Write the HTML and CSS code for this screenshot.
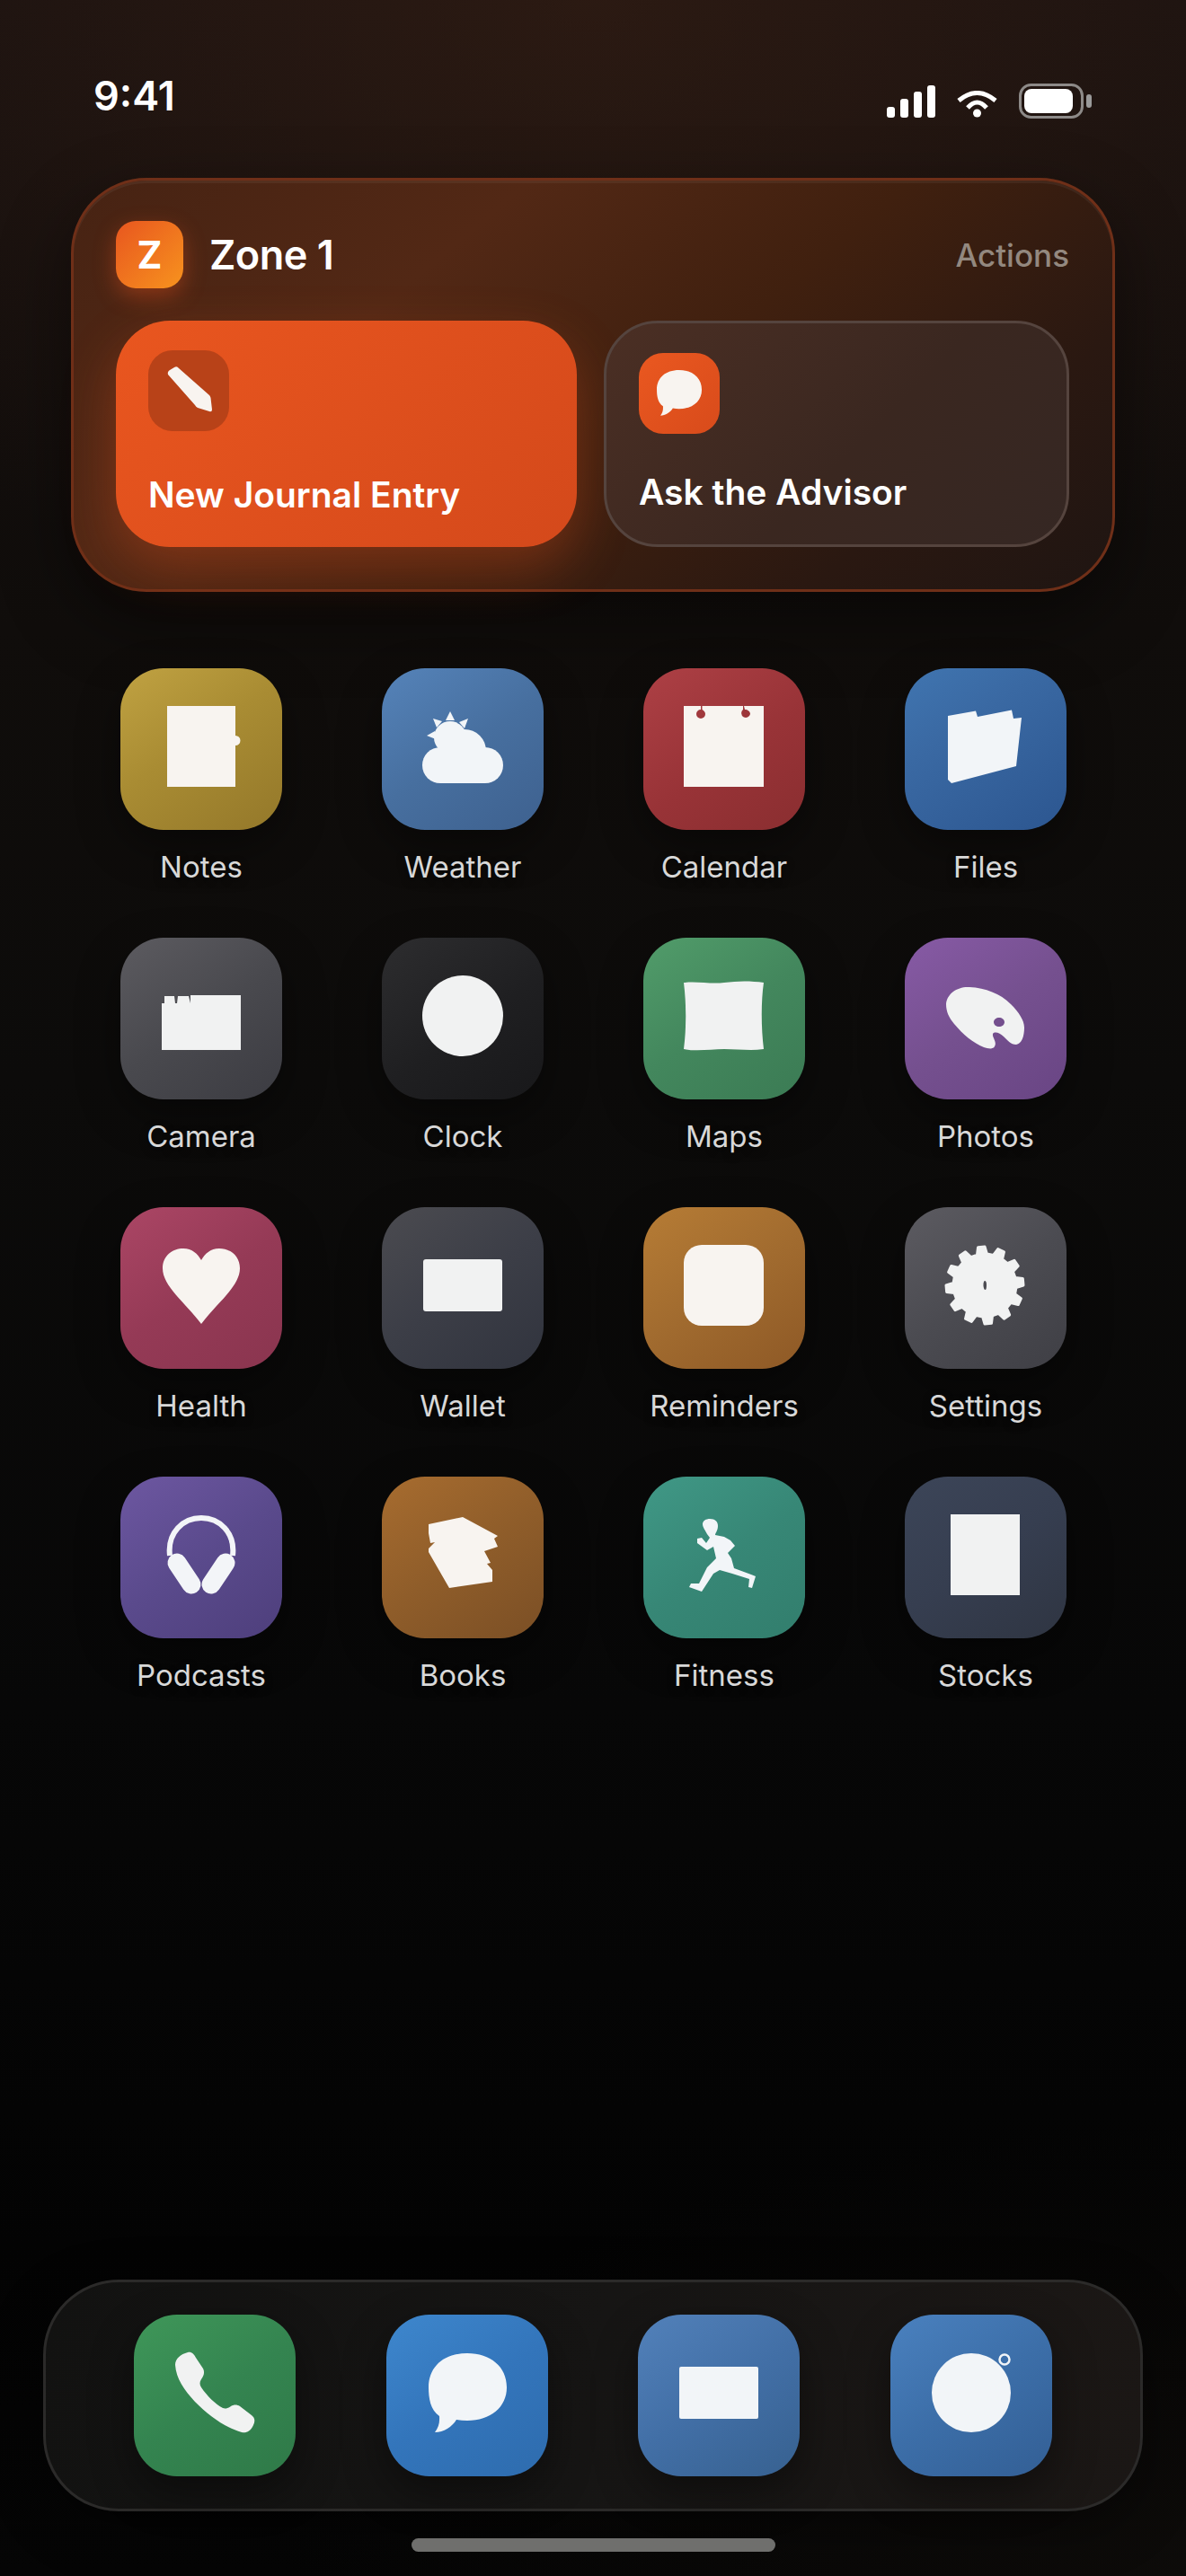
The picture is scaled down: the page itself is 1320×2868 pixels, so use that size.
FILE: index.html
```html
<!DOCTYPE html>
<html lang="en">
<head>
<meta charset="utf-8">
<title>Home Screen</title>
<link rel="stylesheet" href="styles.css">
</head>
<body>
<div class="screen">
  <header class="status">
    <span class="time">9:41</span>
    <div class="status-icons">
      <svg class="sig" width="54" height="36" viewBox="0 0 54 36"><rect x="0" y="24" width="9" height="12" rx="3"/><rect x="15" y="15" width="9" height="21" rx="3"/><rect x="30" y="7" width="9" height="29" rx="3"/><rect x="45" y="0" width="9" height="36" rx="3"/></svg>
      <svg class="wifi" width="45" height="30" viewBox="0 0 45 30"><path d="M2 11Q22.500-6 43 11"/><path d="M12 19Q22.500 7 33 19"/><circle cx="22.500" cy="25" r="4.500"/></svg>
      <svg class="batt" width="81" height="39" viewBox="0 0 81 39"><rect class="batt-shell" x="1.500" y="1.500" width="69" height="36" rx="12"/><rect class="batt-fill" x="6" y="6" width="54" height="27" rx="8"/><rect class="batt-nub" x="75" y="12" width="6" height="15" rx="3"/></svg>
    </div>
  </header>

  <section class="widget">
    <div class="widget-head">
      <div class="zone-badge">Z</div>
      <div class="zone-title">Zone 1</div>
      <div class="zone-actions">Actions</div>
    </div>
    <div class="widget-btns">
      <div class="btn btn-primary">
        <div class="btn-icon btn-icon-dark">
          <svg class="glyph" viewBox="0 0 90 90"><path class="warm" d="M22 27Q21 24 24 22L29 19Q32 17 34 20L68 50Q69 51 69.500 53L71 66Q71 69 68 68L55 64Q53 63 52 61Z"/></svg>
        </div>
        <div class="btn-label">New Journal Entry</div>
      </div>
      <div class="btn btn-ghost">
        <div class="btn-icon btn-icon-orange">
          <svg class="glyph" viewBox="0 0 90 90"><g transform="translate(-7 -5.700) scale(.575)"><path class="warm" d="M90 43C116 43 134 58 134 81C134 103 116 118 90 118C86 118 82 117.500 78 117C73 125 64 131 54 131C58 126 59.500 121 59 113C49 106 47 93 47 81C47 58 64 43 90 43Z"/></g></svg>
        </div>
        <div class="btn-label">Ask the Advisor</div>
      </div>
    </div>
  </section>

  <main class="apps">
    <div class="app">
      <div class="icon notes"><svg class="glyph" viewBox="0 0 180 180"><path class="warm" d="M52 42H128V75A5 5 0 0 1 128 86V132H52Z"/></svg></div>
      <div class="label">Notes</div>
    </div>
    <div class="app">
      <div class="icon weather"><svg class="glyph" viewBox="0 0 180 180"><g class="cool"><polygon points="76,48 71,58 81,58"/><polygon points="96,56 86,60 92,67"/><polygon points="57,56 67,59 61,66"/><polygon points="50,75 59,70 60,79"/><circle cx="76" cy="77" r="18"/><circle cx="92" cy="92" r="24"/><circle cx="65" cy="108" r="20"/><circle cx="115" cy="108" r="20"/><rect x="65" y="100" width="50" height="28"/></g></svg></div>
      <div class="label">Weather</div>
    </div>
    <div class="app">
      <div class="icon calendar"><svg class="glyph" viewBox="0 0 180 180"><path class="warm" fill-rule="evenodd" d="M45 42H64V46A5 5 0 1 0 69 51C69 49 67.500 47 65.500 46V42H111V46A5 5 0 1 0 119 51C119 48 116 46 113 46L112 42H134V132H45Z"/></svg></div>
      <div class="label">Calendar</div>
    </div>
    <div class="app">
      <div class="icon files"><svg class="glyph" viewBox="0 0 180 180"><path class="cool" d="M48 53L79 47.500L81 54L119 46.500L121 56L130 55L124 109L52 128L48 124Z"/></svg></div>
      <div class="label">Files</div>
    </div>

    <div class="app">
      <div class="icon camera"><svg class="glyph" viewBox="0 0 180 180"><path class="neutral" d="M46 73H49V65H60L61 73H63L64 65H76L78 73V64H134V125H46Z"/></svg></div>
      <div class="label">Camera</div>
    </div>
    <div class="app">
      <div class="icon clock"><svg class="glyph" viewBox="0 0 180 180"><circle class="neutral" cx="90" cy="87" r="45"/></svg></div>
      <div class="label">Clock</div>
    </div>
    <div class="app">
      <div class="icon maps"><svg class="glyph" viewBox="0 0 180 180"><path class="neutral" d="M45 50C60 48 75 52 90 50C105 48 120 48 134 50C131 70 131 100 134 124C120 126 105 124 90 124C75 124 60 127 45 124C48 100 48 75 45 50Z"/></svg></div>
      <div class="label">Maps</div>
    </div>
    <div class="app">
      <div class="icon photos"><svg class="glyph" viewBox="0 0 180 180"><path class="neutral" fill-rule="evenodd" d="M46 74C47 62 59 54 72 55C90 56 106 62 118 74C127 83 133 92 133 100C133 110 130 118 124 119C118 119 114 114 110 110C106 106 100 104 98 107C97 111 103 116 100 121C98 125 92 123 88 122C76 117 65 108 55 96C49 89 46 82 46 74ZM105 89C102 89 99 91 99 94C99 97 102 99 105 99C108 99 111 97 111 94C111 91 108 89 105 89Z"/></svg></div>
      <div class="label">Photos</div>
    </div>

    <div class="app">
      <div class="icon health"><svg class="glyph" viewBox="0 0 180 180"><path class="warm" d="M90 130C72 106 47 88 47 68C47 54 58 46 70 46C80 46 86 52 90 59C94 52 100 46 110 46C122 46 133 54 133 68C133 88 108 106 90 130Z"/></svg></div>
      <div class="label">Health</div>
    </div>
    <div class="app">
      <div class="icon wallet"><svg class="glyph" viewBox="0 0 180 180"><rect class="neutral" x="46" y="58" width="88" height="58" rx="3"/></svg></div>
      <div class="label">Wallet</div>
    </div>
    <div class="app">
      <div class="icon reminders"><svg class="glyph" viewBox="0 0 180 180"><rect class="warm" x="45" y="42" width="89" height="90" rx="20"/></svg></div>
      <div class="label">Reminders</div>
    </div>
    <div class="app">
      <div class="icon settings"><svg class="glyph" viewBox="0 0 180 180"><path class="gear" fill-rule="evenodd" d="M122.960 78.530L131.350 79.530L132 87L123.900 89.440L122.640 96.650L129.410 101.710L126.240 108.500L118.020 106.570L113.310 112.180L116.640 119.940L110.500 124.240L104.340 118.460L97.470 120.960L96.470 129.350L89 130L86.560 121.900L79.350 120.640L74.290 127.410L67.500 124.240L69.430 116.020L63.820 111.310L56.060 114.640L51.760 108.500L57.540 102.340L55.040 95.470L46.650 94.470L46 87L54.100 84.560L55.360 77.350L48.590 72.290L51.760 65.500L59.980 67.430L64.690 61.820L61.360 54.060L67.500 49.760L73.660 55.540L80.530 53.040L81.530 44.650L89 44L91.440 52.100L98.650 53.360L103.710 46.590L110.500 49.760L108.570 57.980L114.180 62.690L121.940 59.360L126.240 65.500L120.460 71.660ZM89 80.500C87 80.500 85.500 84 86 88C86.500 91.500 88 93.500 89.500 93.500C91.500 93.500 92.500 90 92.500 86.500C92.500 83 91 80.500 89 80.500Z"/></svg></div>
      <div class="label">Settings</div>
    </div>

    <div class="app">
      <div class="icon podcasts"><svg class="glyph" viewBox="0 0 180 180"><path class="phones-band" d="M55 88C52 62 70 46 90 46C110 46 128 62 125 88"/><path class="phones-cup" d="M63 96L79 120"/><path class="phones-cup" d="M117 96L101 120"/></svg></div>
      <div class="label">Podcasts</div>
    </div>
    <div class="app">
      <div class="icon books"><svg class="glyph" viewBox="0 0 180 180"><path class="warm" d="M52 53L90 45L129 66L125 69L129 78L114 83L121 96L117 97L123 104V117L75 124L52 84V80L59 73L54 74L52 63Z"/></svg></div>
      <div class="label">Books</div>
    </div>
    <div class="app">
      <div class="icon fitness"><svg class="glyph" viewBox="0 0 180 180"><path class="cool" d="M74 47C80 47 83 50 83 55C83 60 80 63 80 65L90 67L97 71L102 77L94 85L98 91L101 102L120 109L125 111L121 124L117 123L118 114L99 108L85 104L78 108L65 128L51 123L53 119L62 119L71 101L81 91L78 78L71 82L60 74L60 69L65 68L70 74L74 68L71 64C69 60 66 56 66 53C66 49 70 47 74 47Z"/></svg></div>
      <div class="label">Fitness</div>
    </div>
    <div class="app">
      <div class="icon stocks"><svg class="glyph" viewBox="0 0 180 180"><rect class="neutral" x="51" y="42" width="77" height="90"/></svg></div>
      <div class="label">Stocks</div>
    </div>
  </main>

  <footer class="dock">
    <div class="icon phone"><svg class="glyph" viewBox="0 0 180 180"><path class="neutral" d="M60 42C64 41 67 44 69 48L77 60C79 64 78 68 75 72C73 75 73 78 75 81C81 90 91 100 99 104C102 105 105 104 108 102C111 100 115 100 118 102L131 112C135 115 135 119 133 123C130 130 125 132 120 131C100 125 83 112 68 97C56 84 47 71 46 56C46 49 52 44 60 42Z"/></svg></div>
    <div class="icon messages"><svg class="glyph" viewBox="0 0 180 180"><path class="cool" d="M90 43C116 43 134 58 134 81C134 103 116 118 90 118C86 118 82 117.500 78 117C73 125 64 131 54 131C58 126 59.500 121 59 113C49 106 47 93 47 81C47 58 64 43 90 43Z"/></svg></div>
    <div class="icon mail"><svg class="glyph" viewBox="0 0 180 180"><rect class="cool" x="46" y="58" width="88" height="58" rx="2"/></svg></div>
    <div class="icon safari"><svg class="glyph" viewBox="0 0 180 180"><circle class="cool" cx="90" cy="87" r="44"/><circle class="safari-ring" cx="127" cy="50" r="5.500"/></svg></div>
  </footer>
  <div class="home-bar"></div>
</div>
</body>
</html>
```

FILE: styles.css
```css
* { box-sizing: border-box; }
html, body { margin: 0; padding: 0; background: #000; }
body { font-family: Inter, "Liberation Sans", sans-serif; color: #fff; }

.screen {
  width: 1320px;
  height: 2868px;
  overflow: hidden;
  display: flex;
  flex-direction: column;
  background:
    radial-gradient(ellipse 1100px 700px at 50% 0, rgba(70, 38, 22, .42), rgba(70, 38, 22, 0) 100%),
    radial-gradient(ellipse 1000px 500px at 100% 100%, rgba(14, 12, 10, .9), rgba(14, 12, 10, 0) 100%),
    linear-gradient(180deg, #181110 0, #100d0b 700px, #0c0b0a 1200px, #070707 1900px, #030303 2500px, #050505 2868px);
}

/* status bar */
.status {
  height: 198px;
  padding: 80px 105px 0 104px;
  display: flex;
  justify-content: space-between;
  align-items: flex-start;
  flex: none;
}
.time { font-size: 45px; font-weight: 600; line-height: 54px; }
.status-icons { display: flex; gap: 24px; align-items: flex-end; margin-top: 13px; }
.sig { fill: #fff; margin-bottom: 1px; }
.wifi { fill: #fff; margin-bottom: 1px; }
.wifi path { fill: none; stroke: #fff; stroke-width: 5; }
.batt-shell { fill: none; stroke: #8d8a88; stroke-width: 3; }
.batt-fill { fill: #fff; }
.batt-nub { fill: #9a9a9a; }

/* widget */
.widget {
  flex: none;
  margin: 0 79px;
  height: 461px;
  padding: 45px 48px 47px;
  border: 3px solid #6f2f18;
  border-radius: 84px;
  background: linear-gradient(140deg, #472313 0, #522815 30%, #40200f 55%, #2a1811 80%, #1f1512 100%);
  box-shadow: 0 30px 80px rgba(0, 0, 0, .45), inset 0 3px 0 rgba(255, 255, 255, .05);
}
.widget-head { display: flex; align-items: center; height: 75px; margin-left: -1px; }
.zone-badge {
  width: 75px;
  height: 75px;
  border-radius: 22px;
  background: linear-gradient(135deg, #e8561f, #f7931e);
  box-shadow: 0 9px 24px rgba(232, 83, 30, .4);
  display: flex;
  align-items: center;
  justify-content: center;
  font-size: 42px;
  font-weight: 700;
}
.zone-title { margin-left: 29px; font-size: 45px; font-weight: 600; letter-spacing: -.5px; }
.zone-actions { margin-left: auto; font-size: 35px; font-weight: 500; color: #93887f; }

.widget-btns {
  display: grid;
  grid-template-columns: 513fr 518fr;
  gap: 30px;
  margin-top: 36px;
  margin-left: -1px;
  height: 252px;
}
.btn {
  display: flex;
  flex-direction: column;
  justify-content: space-between;
  padding: 33px 36px 34px;
  border-radius: 60px;
}
.btn-primary {
  background: linear-gradient(135deg, #e9561f, #d4491b);
  box-shadow: 0 24px 60px rgba(232, 83, 30, .32);
}
.btn-ghost {
  border: 3px solid #55443e;
  background: linear-gradient(135deg, #4b2f24 0, #3a2720 55%, #352723 100%);
}
.btn-icon { width: 90px; height: 90px; border-radius: 27px; flex: none; }
.btn-icon-dark { background: #b84218; }
.btn-icon-orange { background: linear-gradient(135deg, #ea5820, #d84b1b); }
.btn-label { font-size: 39px; font-weight: 600; line-height: 48px; }

.glyph { display: block; width: 100%; height: 100%; }
.warm { fill: #f8f4f0; }
.cool { fill: #f2f5f8; }
.neutral { fill: #f1f2f2; }

/* apps */
.apps {
  flex: none;
  margin-top: 85px;
  padding-left: 134px;
  display: grid;
  grid-template-columns: repeat(4, 180px);
  column-gap: 111px;
  row-gap: 58px;
}
.app { width: 180px; text-align: center; }
.icon {
  width: 180px;
  height: 180px;
  border-radius: 48px;
  box-shadow: 0 18px 48px rgba(0, 0, 0, .4);
  flex: none;
}
.label {
  margin-top: 20px;
  font-size: 33px;
  line-height: 42px;
  color: #d8d8d8;
  white-space: nowrap;
  text-shadow: 0 3px 9px rgba(0, 0, 0, .6);
}

.notes { background: linear-gradient(145deg, #c0a242 0, #a98c33 45%, #94782a 100%); }
.weather { background: linear-gradient(145deg, #5583b9 0, #476f9f 50%, #3e618f 100%); }
.calendar { background: linear-gradient(145deg, #ad4045 0, #983337 55%, #8a2e30 100%); }
.files { background: linear-gradient(145deg, #4075b0 0, #3a69a3 35%, #2c5690 100%); }
.camera { background: linear-gradient(145deg, #5c5b60 0, #49494e 50%, #3c3c42 100%); }
.clock { background: linear-gradient(145deg, #2d2d2f 0, #1f1f21 55%, #18181a 100%); }
.maps { background: linear-gradient(145deg, #519c6a 0, #43875d 50%, #3b7b54 100%); }
.photos { background: linear-gradient(145deg, #875aa5 0, #75508f 50%, #694584 100%); }
.health { background: linear-gradient(145deg, #ab4665 0, #953a56 50%, #8a354f 100%); }
.wallet { background: linear-gradient(145deg, #4b4b50 0, #3c3e47 50%, #31343e 100%); }
.reminders { background: linear-gradient(145deg, #b67c35 0, #a16b2f 50%, #8e5926 100%); }
.settings { background: linear-gradient(145deg, #5c5b61 0, #4b4b51 50%, #3f3f45 100%); }
.podcasts { background: linear-gradient(145deg, #6d57a1 0, #5a4a8c 50%, #4e3f7c 100%); }
.books { background: linear-gradient(145deg, #a76c2f 0, #8f5d2a 50%, #7b4f25 100%); }
.fitness { background: linear-gradient(145deg, #409886 0, #378776 50%, #327e6d 100%); }
.stocks { background: linear-gradient(145deg, #3c4558 0, #363e50 50%, #2f3542 100%); }
.phone { background: linear-gradient(145deg, #3f9759 0, #348450 50%, #2f7a48 100%); }
.messages { background: linear-gradient(145deg, #3e87cd 0, #3375bb 50%, #2e6cae 100%); }
.mail { background: linear-gradient(145deg, #5281ba 0, #426fa6 50%, #376190 100%); }
.safari { background: linear-gradient(145deg, #4a81bf 0, #3c6ea8 50%, #335f95 100%); }

.gear { fill: #f1f2f2; stroke: #f1f2f2; stroke-width: 3; stroke-linejoin: round; }
.phones-band { fill: none; stroke: #f3f5f8; stroke-width: 6; }
.phones-cup { fill: none; stroke: #f3f5f8; stroke-width: 21; stroke-linecap: round; }
.safari-ring { fill: none; stroke: #f1f4f7; stroke-width: 2.500; }

/* dock */
.dock {
  flex: none;
  margin: auto 48px 0;
  height: 258px;
  padding: 36px 48px;
  border: 3px solid #2b2a29;
  border-radius: 84px;
  display: flex;
  justify-content: space-around;
  background: linear-gradient(100deg, #121211 0, #161514 50%, #1b1715 100%);
  box-shadow: 0 18px 60px rgba(0, 0, 0, .4);
}
.home-bar {
  flex: none;
  width: 405px;
  height: 15px;
  margin: 30px auto 27px;
  border-radius: 8px;
  background: #6f6f6d;
}
```
